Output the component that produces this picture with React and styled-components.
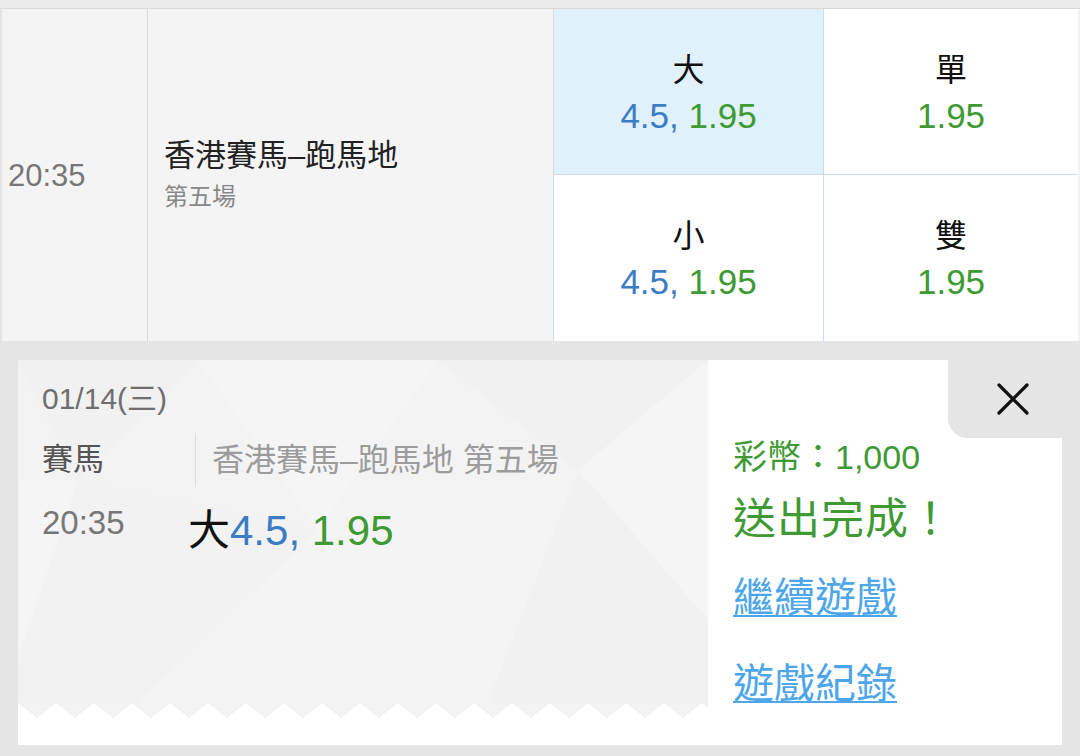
import React from "react";
import styled, { createGlobalStyle } from "styled-components";

const GlobalStyle = createGlobalStyle`
  html, body {
    margin: 0;
    padding: 0;
    background: #e5e5e5;
  }
  body {
    font-family: "Liberation Sans", "Noto Sans CJK TC", sans-serif;
    width: 1080px;
    height: 756px;
    overflow: hidden;
  }
`;

const BLUE = "#3b7dc4";
const GREEN = "#3e9a33";

const Page = styled.div`
  width: 1080px;
  height: 756px;
  display: flex;
  flex-direction: column;
`;

const TopBand = styled.div`
  height: 8px;
  background: #ececec;
  border-bottom: 1px solid #d9d9d9;
`;

const EventRow = styled.div`
  display: grid;
  grid-template-columns: 146px 406px 524px;
  height: 332px;
  background: #f4f4f4;
  border-left: 2px solid #e4e4e4;
`;

const TimeCell = styled.div`
  display: flex;
  align-items: center;
  padding-left: 6px;
  padding-top: 2px;
  font-size: 31px;
  color: #777;
  border-right: 1px solid #d3dbe1;
`;

const NameCell = styled.div`
  display: flex;
  flex-direction: column;
  justify-content: center;
  padding-left: 16px;
  border-right: 1px solid #d3dde5;
`;

const Title = styled.div`
  font-size: 31px;
  line-height: 36px;
  color: #222;
`;

const Sub = styled.div`
  font-size: 24px;
  line-height: 30px;
  color: #888;
  margin-top: 8px;
`;

const OddsGrid = styled.div`
  display: grid;
  grid-template-columns: 270px 254px;
  grid-template-rows: 166px 166px;
  border-right: 1px solid #e2e8ec;
`;

const OddsCell = styled.div`
  display: flex;
  flex-direction: column;
  align-items: center;
  justify-content: center;
  background: ${({ $active }) => ($active ? "#e1f1fb" : "#fff")};
  border-right: ${({ $right }) => ($right ? "none" : "1px solid #cddde9")};
  border-bottom: ${({ $bottom }) => ($bottom ? "none" : "1px solid #cddde9")};
  padding-top: 4px;
`;

const OddsLabel = styled.div`
  font-size: 32px;
  line-height: 40px;
  color: #111;
`;

const OddsValue = styled.div`
  font-size: 35px;
  line-height: 44px;
  margin-top: 4px;
`;

const Num = styled.span`
  color: ${({ $tone }) => ($tone === "blue" ? BLUE : GREEN)};
`;

const Bottom = styled.div`
  flex: 1;
  background: #e5e5e5;
  padding: 19px 18px 11px 18px;
  display: flex;
`;

const Panel = styled.div`
  display: flex;
  width: 1044px;
  height: 385px;
  background: #fff;
`;

const Ticket = styled.div`
  width: 690px;
  display: flex;
  flex-direction: column;
  background: #fff;
`;

const TicketBody = styled.div`
  position: relative;
  height: 343px;
  background: #f3f3f3;
  overflow: hidden;
  padding: 22px 0 0 24px;
  box-sizing: border-box;
`;

const Texture = styled.svg`
  position: absolute;
  left: 0;
  top: 0;
  width: 100%;
  height: 100%;
`;

const TicketContent = styled.div`
  position: relative;
  display: flex;
  flex-direction: column;
`;

const Teeth = styled.div`
  height: 15px;
  background-image: conic-gradient(from -52deg at 50% 100%, #f3f3f3 104deg, transparent 0);
  background-size: 38px 15px;
  background-repeat: repeat-x;
`;

const DateText = styled.div`
  font-size: 30px;
  line-height: 34px;
  color: #6f6f6f;
`;

const InfoRow = styled.div`
  display: flex;
  align-items: center;
  height: 54px;
  margin-top: 17px;
`;

const Label = styled.div`
  width: ${({ $w }) => $w}px;
  flex-shrink: 0;
  font-size: 31px;
  line-height: 36px;
  color: #555;
`;

const Divider = styled.div`
  width: 1px;
  align-self: stretch;
  background: #dcdcdc;
`;

const EventName = styled.div`
  padding-left: 16px;
  font-size: 32px;
  line-height: 36px;
  color: #9c9c9c;
`;

const BetRow = styled.div`
  display: flex;
  align-items: flex-start;
  margin-top: 20px;
`;

const TimeLabel = styled(Label)`
  color: #777;
  font-size: 33px;
  line-height: 28px;
  margin-top: 2px;
`;

const BetText = styled.div`
  font-size: 42px;
  line-height: 48px;
  color: #111;
`;

const Result = styled.div`
  flex: 1;
  display: flex;
  flex-direction: column;
  padding-left: 25px;
`;

const CloseBox = styled.button`
  align-self: flex-end;
  width: 114px;
  height: 78px;
  border: none;
  background: #e5e5e5;
  border-bottom-left-radius: 20px;
  display: flex;
  align-items: center;
  justify-content: center;
  padding: 0 0 0 16px;
  cursor: pointer;
`;

const Coins = styled.div`
  font-size: 34px;
  line-height: 38px;
  color: ${GREEN};
`;

const Done = styled.div`
  font-size: 43px;
  line-height: 50px;
  color: ${GREEN};
  margin-top: 18px;
  letter-spacing: 1px;
`;

const TextLink = styled.a`
  font-size: 41px;
  line-height: 48px;
  color: #4ea6ea;
  text-decoration: underline;
  text-decoration-thickness: 2px;
  text-underline-offset: 3px;
  margin-top: ${({ $gap }) => $gap}px;
  align-self: flex-start;
  cursor: pointer;
`;

const odds = [
  { label: "大", line: "4.5", price: "1.95", active: true },
  { label: "單", price: "1.95", right: true },
  { label: "小", line: "4.5", price: "1.95", bottom: true },
  { label: "雙", price: "1.95", right: true, bottom: true },
];

const CloseIcon = () => (
  <svg width="32" height="32" viewBox="0 0 32 32">
    <path d="M2 2 L30 30 M30 2 L2 30" stroke="#111" strokeWidth="3.2" strokeLinecap="round" />
  </svg>
);

const PolyTexture = () => (
  <Texture viewBox="0 0 690 343" preserveAspectRatio="none">
    <polygon points="0,0 180,0 60,120" fill="#f1f1f1" />
    <polygon points="180,0 420,0 300,170" fill="#f5f5f5" />
    <polygon points="420,0 690,0 560,110" fill="#f1f1f1" />
    <polygon points="560,110 690,0 690,260" fill="#f5f5f5" />
    <polygon points="0,120 60,120 0,300" fill="#f5f5f5" />
    <polygon points="60,120 300,170 120,343" fill="#f2f2f2" />
    <polygon points="300,170 560,110 470,343" fill="#f4f4f4" />
    <polygon points="470,343 560,110 690,260 690,343" fill="#f1f1f1" />
    <polygon points="120,343 300,170 470,343" fill="#f4f4f4" />
    <polygon points="0,300 60,120 120,343 0,343" fill="#f2f2f2" />
  </Texture>
);

export default function App() {
  return (
    <Page>
      <GlobalStyle />
      <TopBand />
      <EventRow>
        <TimeCell>20:35</TimeCell>
        <NameCell>
          <Title>香港賽馬–跑馬地</Title>
          <Sub>第五場</Sub>
        </NameCell>
        <OddsGrid>
          {odds.map((o) => (
            <OddsCell key={o.label} $active={o.active} $right={o.right} $bottom={o.bottom}>
              <OddsLabel>{o.label}</OddsLabel>
              <OddsValue>
                {o.line && <Num $tone="blue">{o.line}, </Num>}
                <Num $tone="green">{o.price}</Num>
              </OddsValue>
            </OddsCell>
          ))}
        </OddsGrid>
      </EventRow>
      <Bottom>
        <Panel>
          <Ticket>
            <TicketBody>
              <PolyTexture />
              <TicketContent>
                <DateText>01/14(三)</DateText>
                <InfoRow>
                  <Label $w={153}>賽馬</Label>
                  <Divider />
                  <EventName>香港賽馬–跑馬地 第五場</EventName>
                </InfoRow>
                <BetRow>
                  <TimeLabel $w={146}>20:35</TimeLabel>
                  <BetText>
                    大<Num $tone="blue">4.5, </Num>
                    <Num $tone="green">1.95</Num>
                  </BetText>
                </BetRow>
              </TicketContent>
            </TicketBody>
            <Teeth />
          </Ticket>
          <Result>
            <CloseBox aria-label="close">
              <CloseIcon />
            </CloseBox>
            <Coins>彩幣：1,000</Coins>
            <Done>送出完成！</Done>
            <TextLink $gap={30}>繼續遊戲</TextLink>
            <TextLink $gap={38}>遊戲紀錄</TextLink>
          </Result>
        </Panel>
      </Bottom>
    </Page>
  );
}
